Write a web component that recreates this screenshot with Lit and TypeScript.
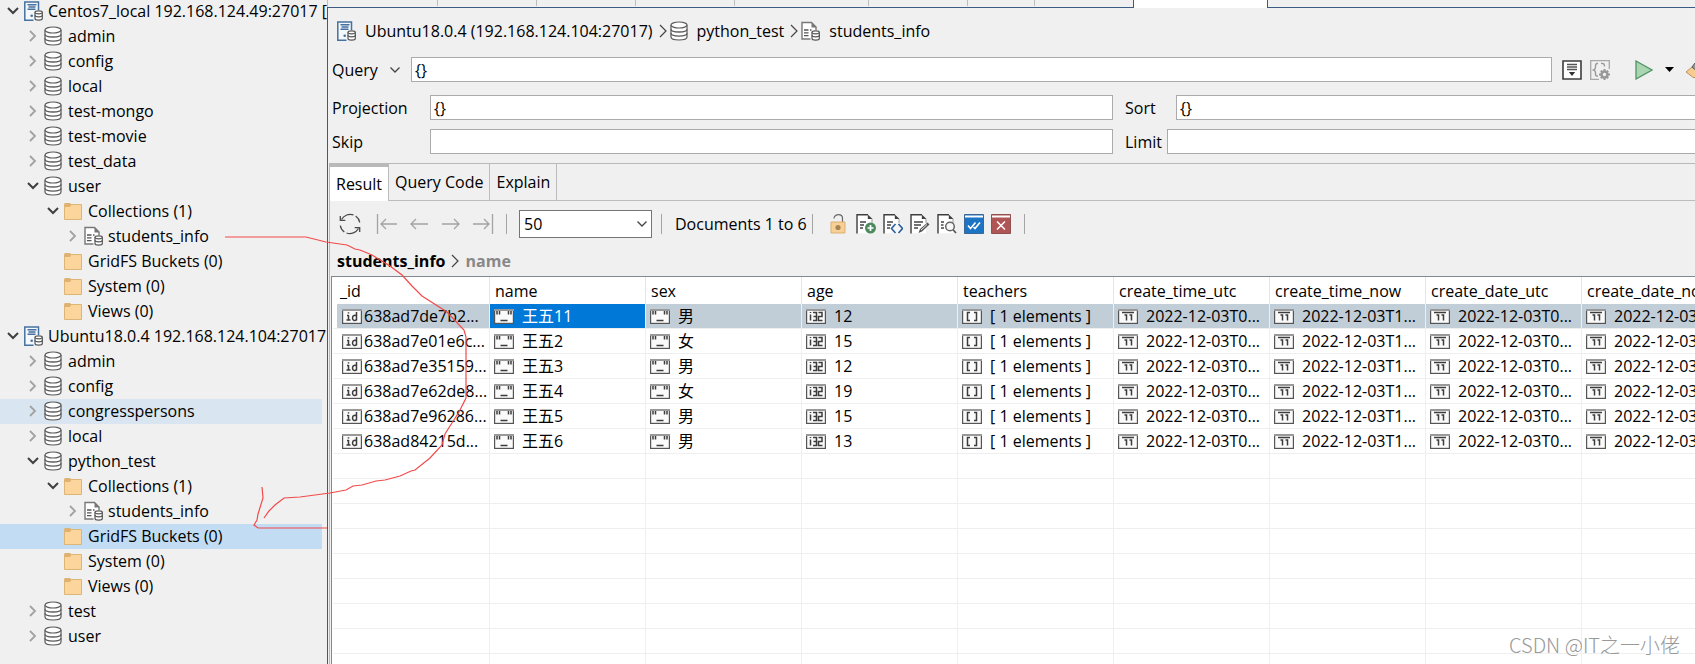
import { LitElement, html, css, svg, nothing } from "lit";
import { customElement, property } from "lit/decorators.js";
import { classMap } from "lit/directives/class-map.js";

const dbShape = svg`
  <path d="M1 4v12c0 1.900 3.500 3 8 3s8-1.100 8-3V4" fill="#fdfdfd" stroke="#5a5a5a" stroke-width="1.200"/>
  <ellipse cx="9" cy="4" rx="8" ry="3" fill="#fdfdfd" stroke="#5a5a5a" stroke-width="1.200"/>
  <path d="M1 8.200c0 1.900 3.500 2.800 8 2.800s8-.9 8-2.800M1 12.300c0 1.900 3.500 2.800 8 2.800s8-.9 8-2.800" fill="none" stroke="#5a5a5a" stroke-width="1.300"/>`;

const smallDb = svg`
  <path d="M11 11.500v6c0 1 1.600 1.600 3.600 1.600s3.700-.6 3.700-1.600v-6" fill="#fff" stroke="#555" stroke-width="1.200"/>
  <ellipse cx="14.650" cy="11.300" rx="3.700" ry="1.500" fill="#fff" stroke="#555" stroke-width="1.200"/>
  <path d="M11 14.300c0 1 1.600 1.500 3.600 1.500s3.700-.5 3.700-1.500" fill="none" stroke="#555" stroke-width="1.200"/>`;

const docPage = svg`
  <path d="M2 .8h10l4 4.200v14.200H2z" fill="#fff"/>
  <path d="M1 19.400V.8h11" fill="none" stroke="#3f3f3f" stroke-width="1.400"/>
  <path d="M11.800.5v4.600h4.700z" fill="#3f3f3f"/>
  <path d="M16 5v4" stroke="#999" stroke-width="1"/>`;

const icons: Record<string, { box: string; w: number; h: number; art: unknown }> = {
  db: { box: "0 0 18 20", w: 18, h: 20, art: dbShape },
  server: {
    box: "0 0 19 20", w: 19, h: 20, art: svg`
    <path d="M1 1h14v9h-4v9H1z" fill="#f5f8fb"/>
    <path d="M14.500 9V1H.800v18.200h8.700" fill="none" stroke="#44719f" stroke-width="1.500"/>
    <path d="M3.500 3.700h9M4.500 6h7M3.500 8.300h8" stroke="#44719f" stroke-width="1.400"/>
    <circle cx="7.700" cy="14.700" r="1.300" fill="#44719f"/>${smallDb}` },
  collection: {
    box: "0 0 19 20", w: 19, h: 20, art: svg`
    <path d="M1 1.500h9.500l4.500 4.500v12.500H1z" fill="#fff"/>
    <path d="M15 9V6L10.500 1.500H1v16.500h8.500" fill="none" stroke="#777" stroke-width="1.400"/>
    <path d="M10.500 1.500v5h5" fill="#777"/>
    <path d="M3 9h4.500M3 11.800h4.500M3 14.600h4.500M9 9h1.500" stroke="#555" stroke-width="1.300"/>${smallDb}` },
  folder: {
    box: "0 0 18 18", w: 18, h: 18, art: svg`
    <path d="M.5 2.500h17v15H.5z" fill="#fcd59c" stroke="#dcb677"/>
    <path d="M.5 1h5.500l1.500 1.500L6 5H.5z" fill="#dfb271"/>` },
  refresh: {
    box: "0 0 22 22", w: 22, h: 22, art: svg`
    <g fill="none" stroke="#4a4a4a" stroke-width="1.300"><path d="M2.500 6.500A10 10 0 0 1 14.500 1.900M16.700 3a10 10 0 0 1 4 6.500M19.500 15.500A10 10 0 0 1 7.500 20M5.300 19A10 10 0 0 1 1.300 12.500"/>
    <path d="M1.300 3v4.300h5M20.700 19v-4.300h-5"/></g>` },
  first: { box: "0 0 22 22", w: 22, h: 22, art: svg`<path d="M1.500 1v20M21 11H5M10 6l-5 5 5 5" fill="none" stroke="#a3a3a3" stroke-width="1.300"/>` },
  prev: { box: "0 0 22 22", w: 22, h: 22, art: svg`<path d="M20 11H3M8 6l-5 5 5 5" fill="none" stroke="#a3a3a3" stroke-width="1.300"/>` },
  next: { box: "0 0 22 22", w: 22, h: 22, art: svg`<path d="M2 11h17M14 6l5 5-5 5" fill="none" stroke="#a3a3a3" stroke-width="1.300"/>` },
  last: { box: "0 0 22 22", w: 22, h: 22, art: svg`<path d="M20.500 1v20M1 11h16M12 6l5 5-5 5" fill="none" stroke="#a3a3a3" stroke-width="1.300"/>` },
  lock: {
    box: "0 0 20 20", w: 20, h: 20, art: svg`
    <path d="M5 4.500C5 2 7 .7 9.500.7s4 1.700 4 3.800V8" fill="none" stroke="#666" stroke-width="1.200"/>
    <path d="M2 8h14v11H2z" fill="#f8cf94" stroke="#d9b070"/><circle cx="9" cy="13.500" r="2.600" fill="#a58558"/>` },
  docAdd: {
    box: "0 0 20 20", w: 20, h: 20, art: svg`${docPage}
    <path d="M4 8h6M4 11h4M4 14h3" stroke="#444" stroke-width="1.300"/>
    <circle cx="14.500" cy="14" r="5.500" fill="#4c8a5e"/><path d="M14.500 11v6M11.500 14h6" stroke="#fff" stroke-width="1.700"/>` },
  docCode: {
    box: "0 0 20 20", w: 20, h: 20, art: svg`${docPage}
    <path d="M4 8h6M4 11h4M4 14h3" stroke="#444" stroke-width="1.300"/>
    <path d="M8 9.500h12v9.500H8z" fill="#f3f5f8"/><path d="M12.500 10L8.500 14.500l4 4.500M15.500 10l4 4.500-4 4.500" fill="none" stroke="#2f5f9a" stroke-width="1.600"/>` },
  docEdit: {
    box: "0 0 20 20", w: 20, h: 20, art: svg`${docPage}
    <path d="M4 8h9M4 11h7M4 14h4" stroke="#444" stroke-width="1.300"/>
    <path d="M8.500 19l1.500-4 7.500-6.500 2 2L12 17.500z" fill="#555"/><path d="M11 16l6-5.500" stroke="#eee" stroke-width="1"/>` },
  docFind: {
    box: "0 0 20 20", w: 20, h: 20, art: svg`${docPage}
    <path d="M4 8h3M4 11h2.500M4 14h3" stroke="#444" stroke-width="1.300"/>
    <circle cx="13" cy="12.500" r="4.300" fill="#f8f8f8" stroke="#666" stroke-width="1.500"/><path d="M16 15.700l3 3.300" stroke="#555" stroke-width="1.700"/>` },
  validate: {
    box: "0 0 20 20", w: 20, h: 20, art: svg`
    <path d="M.5.5h19v19H.5z" fill="#1c74c4" stroke="#3b6696"/><path d="M1 1.500h18v2H1z" fill="#fff"/>
    <path d="M4 11.500l2.500 3 5-6M9.500 13l1.500 1.500 5-6" fill="none" stroke="#fff" stroke-width="1.600"/>` },
  close: {
    box: "0 0 20 20", w: 20, h: 20, art: svg`
    <path d="M.5.5h19v19H.5z" fill="#b05555" stroke="#8e5050"/><path d="M1 1.500h18v2H1z" fill="#fff"/>
    <path d="M6 7.500l8 8M14 7.500l-8 8" stroke="#fff" stroke-width="1.500"/>` },
  history: {
    box: "0 0 20 20", w: 20, h: 20, art: svg`
    <path d="M1 1h18v18H1z" fill="#fff" stroke="#3c3c3c" stroke-width="1.600"/>
    <path d="M5 4.500h10M5 7h10M5 9.500h10" stroke="#555" stroke-width="1.400"/><path d="M6.800 12h6.400L10 16z" fill="#333"/>` },
  settings: {
    box: "0 0 20 20", w: 20, h: 20, art: svg`
    <path d="M19.300 9V.7H.7v18.600H9" fill="none" stroke="#a8a8a8" stroke-width="1.300"/>
    <path d="M8 3.500C5 3 5.500 6 5.500 7.500S4.500 9.500 3.500 10c1 .5 2 .8 2 2.500s-.5 4 2.500 3.500M11 3.500c3-.5 3.500 1 3.500 3" fill="none" stroke="#999" stroke-width="1.400"/>
    <circle cx="14.500" cy="14.500" r="3" fill="none" stroke="#999" stroke-width="2.600"/>
    <path d="M14.500 9v2.500M14.500 17.500V20M9 14.500h2.500M17.500 14.500H20M10.800 10.800l1.500 1.500M18.200 10.800l-1.500 1.500M10.800 18.200l1.500-1.500M18.200 18.200l-1.500-1.500" stroke="#999" stroke-width="2"/>` },
  run: { box: "0 0 18 20", w: 18, h: 20, art: svg`<path d="M1 1l16 9-16 9z" fill="#a9d5b1" stroke="#4f9465" stroke-width="1.300"/>` },
  caret: { box: "0 0 9 5", w: 9, h: 5, art: svg`<path d="M0 0h9L4.500 5z" fill="#000"/>` },
  clear: {
    box: "0 0 20 20", w: 20, h: 20, art: svg`
    <path d="M1 12l6-5 8 5-6 6z" fill="#f6cc92" stroke="#b99361"/><path d="M7 7l3-4 9 5-5 5z" fill="#999" stroke="#555"/>` },
  crumb: { box: "0 0 8 14", w: 8, h: 14, art: svg`<path d="M1 1l6 6-6 6" fill="none" stroke="#444" stroke-width="1.200"/>` },
  down: { box: "0 0 10 6", w: 10, h: 6, art: svg`<path d="M.5.500L5 5 9.500.500" fill="none" stroke="#444" stroke-width="1.300"/>` },
  open: { box: "0 0 12 8", w: 12, h: 8, art: svg`<path d="M1 1l5 5 5-5" fill="none" stroke="#404040" stroke-width="2"/>` },
  shut: { box: "0 0 8 12", w: 8, h: 12, art: svg`<path d="M1 1l5 5-5 5" fill="none" stroke="#a2a2a2" stroke-width="1.800"/>` },
};

const typeMarks: Record<string, unknown> = {
  id: svg`<path d="M6.500 6v5M5 6.500h1.500M4.500 11h4M6.500 3.200v1.300M14.500 3v8.500M14.500 7c-1-1-4-1-4 2s3 3 4 1.500" />`,
  string: svg`<path d="M3 2v3.500M5.500 2v3.500M14.500 2v3.500M17 2v3.500M6.500 11.500h7" />`,
  int: svg`<path d="M4.500 5.500v6M4.500 3v1M7 3.500h3.500v8H7M7.500 7.500h3M12.500 3.500H16v4h-3.500v4H16.500" />`,
  array: svg`<path d="M8 3.500H5.500v8H8M12 3.500h2.500v8H12" />`,
  date: svg`<path d="M4 3.500h12M6.500 6h2v5.500M11.500 6h2v5.500" />`,
};

@customElement("ui-icon")
export class UiIcon extends LitElement {
  @property() name = "";
  static styles = css`
    :host { display: inline-flex; flex: none; }
    svg { display: block; }
  `;
  render() {
    const i = icons[this.name];
    if (!i) return nothing;
    return html`<svg width=${i.w} height=${i.h} viewBox=${i.box} aria-hidden="true">${i.art}</svg>`;
  }
}

@customElement("type-badge")
export class TypeBadge extends LitElement {
  @property() kind = "string";
  static styles = css`
    :host { display: inline-flex; flex: none; }
    svg { display: block; }
    .frame { fill: #fafafa; stroke: #555; }
    .top { stroke: #999; stroke-width: 2; }
    .mark { fill: none; stroke: #3c3c3c; stroke-width: 1.500; }
  `;
  render() {
    return html`<svg width="20" height="15" viewBox="0 0 20 15" aria-hidden="true">
      <rect class="frame" x=".5" y=".5" width="19" height="14" stroke-width="1.400"></rect>
      <path class="top" d="M0 1h20"></path>
      <g class="mark">${typeMarks[this.kind]}</g>
    </svg>`;
  }
}

interface Node { label: string; icon: string; level: number; state?: "open" | "shut"; mark?: "hover" | "selected" }

const tree: Node[] = [
  { label: "Centos7_local 192.168.124.49:27017 [", icon: "server", level: 0, state: "open" },
  ...["admin", "config", "local", "test-mongo", "test-movie", "test_data"].map(
    (label): Node => ({ label, icon: "db", level: 1, state: "shut" })),
  { label: "user", icon: "db", level: 1, state: "open" },
  { label: "Collections (1)", icon: "folder", level: 2, state: "open" },
  { label: "students_info", icon: "collection", level: 3, state: "shut" },
  { label: "GridFS Buckets (0)", icon: "folder", level: 2 },
  { label: "System (0)", icon: "folder", level: 2 },
  { label: "Views (0)", icon: "folder", level: 2 },
  { label: "Ubuntu18.0.4 192.168.124.104:27017", icon: "server", level: 0, state: "open" },
  { label: "admin", icon: "db", level: 1, state: "shut" },
  { label: "config", icon: "db", level: 1, state: "shut" },
  { label: "congresspersons", icon: "db", level: 1, state: "shut", mark: "hover" },
  { label: "local", icon: "db", level: 1, state: "shut" },
  { label: "python_test", icon: "db", level: 1, state: "open" },
  { label: "Collections (1)", icon: "folder", level: 2, state: "open" },
  { label: "students_info", icon: "collection", level: 3, state: "shut" },
  { label: "GridFS Buckets (0)", icon: "folder", level: 2, mark: "selected" },
  { label: "System (0)", icon: "folder", level: 2 },
  { label: "Views (0)", icon: "folder", level: 2 },
  { label: "test", icon: "db", level: 1, state: "shut" },
  { label: "user", icon: "db", level: 1, state: "shut" },
];

@customElement("connection-tree")
export class ConnectionTree extends LitElement {
  static styles = css`
    :host { display: block; overflow: hidden; }
    ul { list-style: none; margin: -1px 5px 0 0; padding: 0; }
    .row { display: flex; align-items: center; box-sizing: border-box; height: 25px; padding-bottom: 2px; white-space: nowrap; }
    .hover { background: #d9e6f1; }
    .selected { background: #c2dcf3; }
    .toggle { flex: none; box-sizing: border-box; width: 24px; padding-left: 1px; display: flex; justify-content: center; }
    .icon { flex: none; width: 18px; margin-right: 6px; display: flex; }
    .l1 { padding-left: 20px; }
    .l2 { padding-left: 40px; }
    .l3 { padding-left: 60px; }
  `;
  render() {
    return html`<ul role="tree">
      ${tree.map((n) => html`<li role="treeitem" aria-level=${n.level + 1} class=${classMap({
        row: true, [`l${n.level}`]: true, hover: n.mark === "hover", selected: n.mark === "selected",
      })}>
        <span class="toggle">${n.state ? html`<ui-icon name=${n.state}></ui-icon>` : nothing}</span>
        <span class="icon"><ui-icon name=${n.icon}></ui-icon></span>${n.label}
      </li>`)}
    </ul>`;
  }
}

const columns = ["_id", "name", "sex", "age", "teachers", "create_time_utc", "create_time_now", "create_date_utc", "create_date_now"];
const kinds = ["id", "string", "string", "int", "array", "date", "date", "date", "date"];
const people = [
  ["638ad7de7b2...", "王五11", "男", "12"],
  ["638ad7e01e6c...", "王五2", "女", "15"],
  ["638ad7e35159...", "王五3", "男", "12"],
  ["638ad7e62de8...", "王五4", "女", "19"],
  ["638ad7e96286...", "王五5", "男", "15"],
  ["638ad84215d...", "王五6", "男", "13"],
];
const records = people.map((p) => [
  ...p, "[ 1 elements ]", "2022-12-03T0...", "2022-12-03T1...", "2022-12-03T0...", "2022-12-03T1...",
]);
const spareRows = Array.from({ length: 9 });

@customElement("result-table")
export class ResultTable extends LitElement {
  static styles = css`
    :host { display: block; overflow: hidden; background: #fff; border: solid #828790; border-width: 1px 0 0 1px; padding-left: 1px; }
    table { table-layout: fixed; width: 0; border-spacing: 0; }
    .wide { width: 157px; }
    .std { width: 156px; }
    th { box-sizing: border-box; height: 27px; padding: 0 0 0 5px; border-right: 1px solid #e5e5e5; text-align: left; font-weight: 400; line-height: 26px; white-space: nowrap; overflow: hidden; }
    th:first-child { padding-left: 7px; }
    td { height: 24px; padding: 0; border: solid #efefef; border-width: 0 1px 1px 0; }
    td:first-child { padding-left: 4px; }
    .cell { display: flex; align-items: center; gap: 8px; height: 24px; padding-left: 4px; white-space: nowrap; overflow: hidden; }
    td:first-child .cell { gap: 2px; padding-left: 5px; }
    .active .cell { background: #c1cdd7; }
    .active .focus { background: #0078d7; color: #fff; }
  `;
  render() {
    return html`<table>
      <colgroup>${columns.map((_, i) => html`<col class=${i ? "std" : "wide"}>`)}</colgroup>
      <thead><tr>${columns.map((c) => html`<th scope="col">${c}</th>`)}</tr></thead>
      <tbody>
        ${records.map((r, y) => html`<tr class=${y ? "" : "active"}>${r.map((v, x) => html`<td>
          <div class=${classMap({ cell: true, focus: y === 0 && x === 1 })}><type-badge kind=${kinds[x]}></type-badge>${v}</div>
        </td>`)}</tr>`)}
        ${spareRows.map(() => html`<tr>${columns.map(() => html`<td></td>`)}</tr>`)}
      </tbody>
    </table>`;
  }
}

const iconButton = (name: string, label: string, cls = "") =>
  html`<button type="button" class="icon-btn ${cls}" aria-label=${label}><ui-icon name=${name}></ui-icon></button>`;

@customElement("app-root")
export class AppRoot extends LitElement {
  static styles = css`
    :host {
      display: grid; grid-template-columns: 327px minmax(0, 1fr); height: 100vh; overflow: hidden; position: relative;
      background: #f0f0f0; color: #000; font: 16px/24px "Open Sans", "Noto Sans CJK SC", sans-serif;
    }
    main { display: flex; flex-direction: column; min-width: 0; overflow: hidden; }
    button, input, select { font: inherit; color: inherit; border-radius: 0; box-sizing: border-box; margin: 0; }
    button { border: 0; padding: 0; background: none; }
    .icon-btn { display: flex; flex: none; }

    .editor-tabs { flex: none; display: flex; height: 7px; border-left: 1px solid #bdbdbd; }
    .editor-tab { box-sizing: border-box; border-right: 1px solid #bdbdbd; height: 6px; }
    .w99 { width: 99px; }
    .w110 { width: 110px; }
    .w134 { width: 134px; }
    .w67 { width: 67px; }
    .w98 { width: 98px; border: 0; }
    .w-active { width: 135px; height: 8px; background: #fff; border: solid #3b5b85; border-width: 0 1px; z-index: 1; }

    .editor { flex: 1; min-height: 0; display: flex; flex-direction: column; border: solid #3b5b85; border-width: 1px 0 0 1px; }
    .path { display: flex; align-items: center; height: 24px; padding: 11px 0 0 9px; white-space: nowrap; }
    .path .text { margin: 0 6px 0 9px; }
    .path .sep { margin-right: 3px; }

    .form { padding: 14px 0 9px 4px; display: flex; flex-direction: column; gap: 9px; }
    .line { display: flex; align-items: center; height: 25px; }
    .line.query { margin-bottom: 4px; }
    .line input { flex: 1; min-width: 0; height: 25px; border: 1px solid #ababad; background: #fff; padding: 0 0 0 3px; outline: 0; }
    .query label { width: 58px; }
    .menu { display: flex; width: 21px; }
    .left-part { display: flex; align-items: center; width: 781px; }
    .left-part label { width: 98px; }
    .right-part { display: flex; align-items: center; flex: 1; padding-left: 12px; margin-right: -20px; }
    .right-part .sort { width: 51px; }
    .right-part .limit { width: 42px; }
    .actions { display: flex; align-items: center; width: 143px; overflow: hidden; }
    .actions .icon-btn { margin-left: 8px; }
    .actions .icon-btn.first { margin-left: 10px; }
    .actions .icon-btn.run { margin-left: 25px; }
    .actions .icon-btn.more { margin-left: 12px; }
    .actions .icon-btn.clear { margin-left: 11px; }

    .results { flex: 1; min-height: 0; display: flex; flex-direction: column; margin-left: 1px; border: solid #b9b9b9; border-width: 1px 0 0 1px; }
    .tabs { display: flex; height: 37px; box-sizing: border-box; border-bottom: 1px solid #bcbcbc; flex: none; }
    .tab { padding: 0 6px; border-right: 1px solid #bcbcbc; height: 36px; line-height: 36px; white-space: nowrap; }
    .tab.on { height: 37px; background: #fff; border-top: 3px solid #b9b9b9; line-height: 30px; }
    .tools { flex: none; display: flex; align-items: center; height: 46px; padding: 0 0 2px 9px; white-space: nowrap; }
    .rule { width: 1px; height: 20px; background: #a5a5a5; flex: none; }
    .nav { display: flex; gap: 10px; margin: 0 12px 0 15px; }
    .page-size { display: grid; align-items: center; margin: 0 9px 0 12px; width: 133px; }
    .page-size select, .page-size ui-icon { grid-area: 1 / 1; }
    .page-size select { appearance: none; height: 28px; border: 1px solid #757575; background: #fff; padding: 0 4px; outline: 0; }
    .page-size ui-icon { justify-self: end; margin-right: 5px; pointer-events: none; }
    .count { width: 137px; padding-left: 13px; }
    .doc-tools { display: flex; gap: 7px; margin: 0 13px 0 16px; }
    .field-path { flex: none; display: flex; align-items: center; gap: 6px; height: 24px; padding-left: 7px; margin-bottom: 3px; font-weight: 700; }
    .field-path .dim { color: #888; }
    result-table { flex: 1; min-height: 0; margin-left: 1px; }

    .ink { position: absolute; left: 0; top: 0; pointer-events: none; fill: none; stroke: #f24a4a; stroke-width: 1.200; }
    .mark { position: absolute; right: 15px; bottom: 4px; font: 20px/30px "Noto Sans CJK SC", sans-serif; font-weight: 300; color: #999; text-shadow: -1px -1px 0 #fff; }
  `;
  render() {
    return html`
      <connection-tree></connection-tree>
      <main>
        <div class="editor-tabs">
          ${["w110", "w99", "w99", "w99", "w134", "w99", "w67", "w98"].map((w) => html`<div class="editor-tab ${w}"></div>`)}
          <div class="editor-tab w-active"></div>
        </div>
        <div class="editor">
          <nav class="path">
            <ui-icon name="server"></ui-icon><span class="text">Ubuntu18.0.4 (192.168.124.104:27017)</span>
            <ui-icon class="sep" name="crumb"></ui-icon><ui-icon name="db"></ui-icon><span class="text">python_test</span>
            <ui-icon class="sep" name="crumb"></ui-icon><ui-icon name="collection"></ui-icon><span class="text">students_info</span>
          </nav>
          <form class="form">
            <div class="line query">
              <label for="query">Query</label>
              <button type="button" class="menu" aria-label="Query menu"><ui-icon name="down"></ui-icon></button>
              <input id="query" .value=${"{}"}>
              <div class="actions">
                ${iconButton("history", "History", "first")}
                ${iconButton("settings", "Query settings")}
                ${iconButton("run", "Run", "run")}
                ${iconButton("caret", "Run options", "more")}
                ${iconButton("clear", "Clear", "clear")}
              </div>
            </div>
            <div class="line">
              <div class="left-part"><label for="projection">Projection</label><input id="projection" .value=${"{}"}></div>
              <div class="right-part"><label class="sort" for="sort">Sort</label><input id="sort" .value=${"{}"}></div>
            </div>
            <div class="line">
              <div class="left-part"><label for="skip">Skip</label><input id="skip"></div>
              <div class="right-part"><label class="limit" for="limit">Limit</label><input id="limit"></div>
            </div>
          </form>
          <section class="results">
            <div class="tabs" role="tablist">
              <button type="button" role="tab" class="tab on">Result</button>
              <button type="button" role="tab" class="tab">Query Code</button>
              <button type="button" role="tab" class="tab">Explain</button>
            </div>
            <div class="tools">
              ${iconButton("refresh", "Refresh")}
              <div class="nav">
                ${iconButton("first", "First page")}${iconButton("prev", "Previous page")}
                ${iconButton("next", "Next page")}${iconButton("last", "Last page")}
              </div>
              <span class="rule"></span>
              <div class="page-size">
                <select aria-label="Page size"><option>50</option></select>
                <ui-icon name="down"></ui-icon>
              </div>
              <span class="rule"></span>
              <span class="count">Documents 1 to 6</span>
              <span class="rule"></span>
              <div class="doc-tools">
                ${iconButton("lock", "Unlock editing")}${iconButton("docAdd", "Add document")}
                ${iconButton("docCode", "Edit as JSON")}${iconButton("docEdit", "Edit document")}
                ${iconButton("docFind", "View document")}${iconButton("validate", "Apply changes")}
                ${iconButton("close", "Discard changes")}
              </div>
              <span class="rule"></span>
            </div>
            <div class="field-path"><span>students_info</span><ui-icon name="crumb"></ui-icon><span class="dim">name</span></div>
            <result-table></result-table>
          </section>
        </div>
      </main>
      <svg class="ink" width="480" height="540" viewBox="0 0 480 540" aria-hidden="true">
        <path d="M225 237H306L326 242 347 245 355 249 360 250 372 255 390 266 402 275 412 286 422 296 447 312 464 330 466 337V398L459 412 450 426 445 434 442 445 430 458 415 470 411 471 400 476 385 480 376 481 362 485 353 486 346 490 330 493 300 497 284 498 275 505 269 511 264 518"></path>
        <path d="M262 487L263 498 258 514 257 520 254 525 258 528H327"></path>
      </svg>
      <div class="mark">CSDN @IT之一小佬</div>
    `;
  }
}
